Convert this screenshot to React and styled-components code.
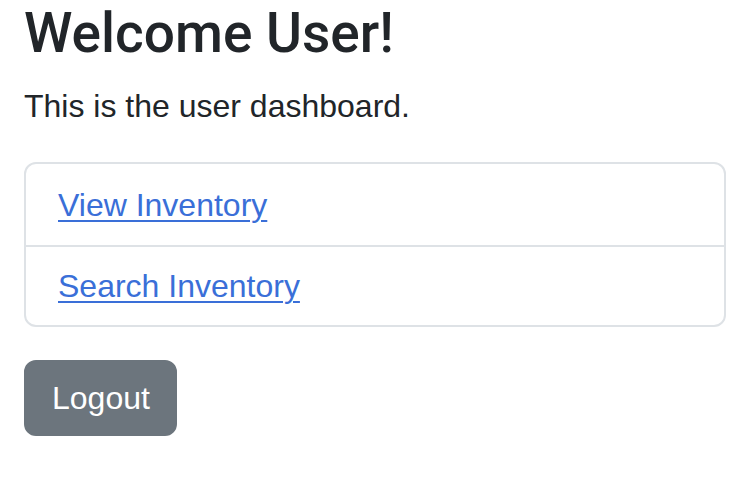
import React from "react";
import styled, { createGlobalStyle } from "styled-components";

const Global = createGlobalStyle`
  html, body { margin: 0; padding: 0; background: #fff; }
  body {
    font-family: "Liberation Sans", Arial, sans-serif;
    color: #212529;
    font-size: 32px;
    line-height: 1.5;
  }
  * { box-sizing: border-box; }
`;

const Container = styled.div`
  padding: 0 24px;
`;

const Title = styled.h1`
  margin: 0 0 16px;
  font-family: Roboto, "Liberation Sans", sans-serif;
  font-size: 55px;
  font-weight: 500;
  line-height: 1.2;
`;

const Lead = styled.p`
  margin: 0 0 32px;
  font-size: 32px;
  line-height: 48px;
`;

const ListGroup = styled.ul`
  list-style: none;
  margin: 0 0 33px;
  padding: 0;
  border: 2px solid #dee2e6;
  border-radius: 12px;
  overflow: hidden;
`;

const ListItem = styled.li`
  padding: 16px 32px;
  height: ${(p) => (p.$last ? 80 : 81)}px;
  border-top: ${(p) => (p.$first ? "none" : "2px solid #dee2e6")};
  display: flex;
  align-items: center;
`;

const Link = styled.a`
  color: #3a6fd8;
  text-decoration: underline;
  text-underline-offset: 4px;
  text-decoration-thickness: 2px;
  font-size: 32px;
`;

const Button = styled.button`
  font-family: inherit;
  font-size: 32px;
  line-height: 48px;
  color: #fff;
  background: #6c757d;
  border: 2px solid #6c757d;
  border-radius: 12px;
  padding: 12px 25px 12px 26px;
  cursor: pointer;
`;

export default function App() {
  return (
    <>
      <Global />
      <Container>
        <Title>Welcome User!</Title>
        <Lead>This is the user dashboard.</Lead>
        <ListGroup>
          <ListItem $first>
            <Link href="#">View Inventory</Link>
          </ListItem>
          <ListItem $last>
            <Link href="#">Search Inventory</Link>
          </ListItem>
        </ListGroup>
        <Button>Logout</Button>
      </Container>
    </>
  );
}
